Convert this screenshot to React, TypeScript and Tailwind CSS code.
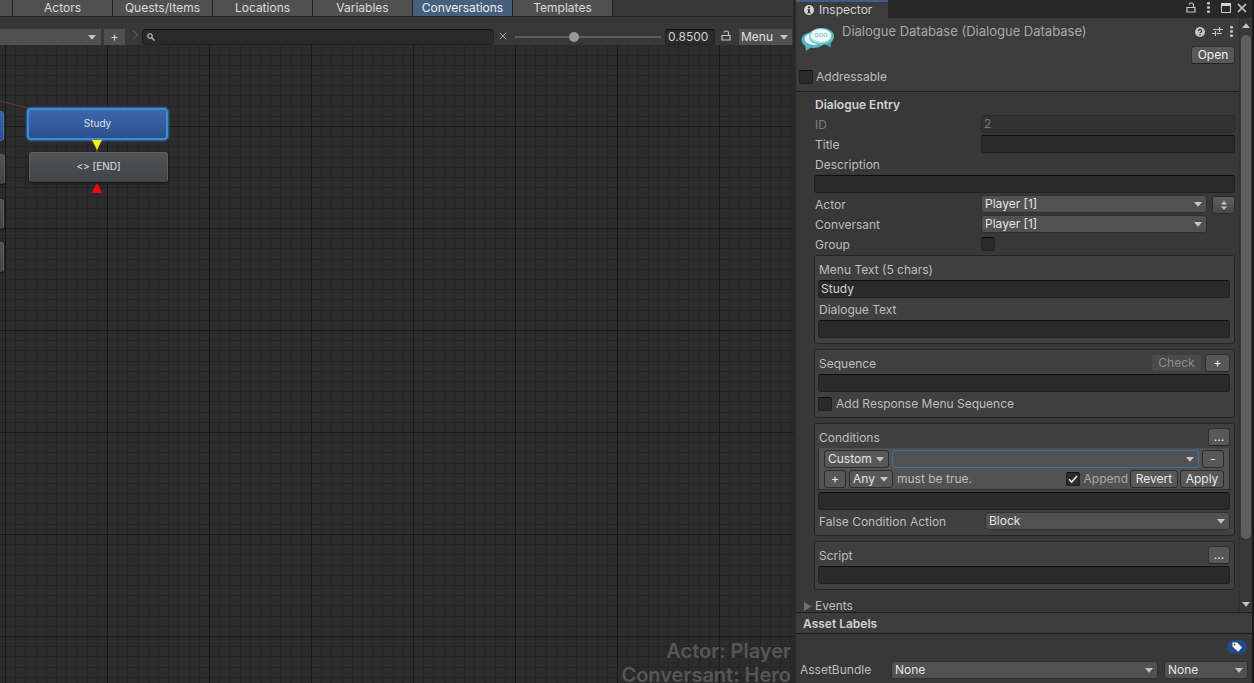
import React, { useId, useState } from 'react';

const tabs = ['Actors', 'Quests/Items', 'Locations', 'Variables', 'Conversations', 'Templates'];

const fieldClass =
  'block h-[18px] w-full min-w-0 rounded-[3px] border border-[#212121] border-t-[#0d0d0d] bg-[#2a2a2a] px-[2px] text-[12px] text-[#d2d2d2] outline-none disabled:border-[#2a2a2a] disabled:bg-[#323232] disabled:text-[#7c7c7c]';
const buttonClass =
  'flex h-[18px] shrink-0 items-center justify-center rounded-[3px] border border-[#303030] border-b-[#242424] bg-[#585858] text-[12px] text-[#eeeeee] disabled:border-[#404040] disabled:bg-[#4a4a4a] disabled:text-[#8c8c8c]';

function Caret({ className = '' }: { className?: string }) {
  return (
    <svg viewBox="0 0 8 5" className={`h-[5px] w-2 ${className}`} fill="#c4c4c4">
      <path d="M0 0h8L4 4.8z" />
    </svg>
  );
}

function LockIcon() {
  return (
    <svg width="10" height="11" viewBox="0 0 10 11" fill="none" stroke="#c4c4c4">
      <path d="M1 5.5h8v4.500H1z" strokeWidth="1.2" />
      <path d="M7.5 5.5V3a2 2 0 0 0-2-2H5a2 2 0 0 0-2 1.6" strokeWidth="1.2" />
    </svg>
  );
}

function KebabIcon() {
  return (
    <svg width="3" height="11" viewBox="0 0 3 11" fill="#c4c4c4">
      <rect width="3" height="2.500" rx=".8" />
      <rect y="4.200" width="3" height="2.500" rx=".8" />
      <rect y="8.400" width="3" height="2.500" rx=".8" />
    </svg>
  );
}

function CloseIcon({ size, color, weight }: { size: number; color: string; weight: number }) {
  return (
    <svg width={size} height={size} viewBox="0 0 10 10" fill="none" stroke={color} strokeWidth={weight}>
      <path d="M1 1l8 8M9 1L1 9" />
    </svg>
  );
}

function DialogueIcon() {
  return (
    <svg width="34" height="26" viewBox="0 0 34 26">
      <path d="M3.500 16l1.500 9 7-5z" fill="#56b0be" />
      <path d="M22 17l7.500 4.500 1-7.500z" fill="#4aa3b3" />
      <ellipse cx="12.500" cy="14" rx="12" ry="8" fill="#58b3c0" />
      <ellipse cx="13" cy="13" rx="9.500" ry="6" fill="#e6f8f7" />
      <ellipse cx="20.500" cy="10.500" rx="12.500" ry="8.500" fill="#62bcc7" />
      <ellipse cx="19.500" cy="10" rx="11" ry="7.500" fill="#a9dde0" />
      <ellipse cx="20" cy="9.500" rx="10" ry="6.200" fill="#f1fbfa" />
      <g fill="none" stroke="#a5d5cf" strokeWidth="1.300">
        <circle cx="15.500" cy="9" r="1.600" />
        <circle cx="20" cy="9" r="1.600" />
        <circle cx="24.500" cy="9" r="1.600" />
      </g>
    </svg>
  );
}

interface DropdownProps {
  label: string;
  options: string[];
  className?: string;
  selectClass?: string;
}

function Dropdown({ label, options, className = '', selectClass = 'border-[#303030] bg-[#515151]' }: DropdownProps) {
  return (
    <div className={`relative ${className}`}>
      <select
        aria-label={label}
        className={`block h-[18px] w-full appearance-none rounded-[3px] border pl-[3px] pr-4 text-[12px] leading-4 text-[#e4e4e4] outline-none ${selectClass}`}
      >
        {options.map((option) => (
          <option key={option}>{option}</option>
        ))}
      </select>
      <Caret className="pointer-events-none absolute right-[5px] top-[7px]" />
    </div>
  );
}

interface CheckboxProps {
  id: string;
  defaultChecked?: boolean;
}

function Checkbox({ id, defaultChecked }: CheckboxProps) {
  return (
    <span className="relative block size-[14px] shrink-0">
      <input
        id={id}
        type="checkbox"
        defaultChecked={defaultChecked}
        className="peer block size-[14px] appearance-none rounded-[2px] border border-[#212121] border-t-[#0d0d0d] bg-[#2a2a2a]"
      />
      <svg
        viewBox="0 0 14 14"
        className="pointer-events-none absolute inset-0 hidden peer-checked:block"
        fill="none"
        stroke="#e8e8e8"
        strokeWidth="1.600"
      >
        <path d="M3 7.200l2.700 2.800L11 4" />
      </svg>
    </span>
  );
}

interface TextRowProps {
  label: string;
  value?: string;
  disabled?: boolean;
}

function InlineField({ label, value = '', disabled }: TextRowProps) {
  const id = useId();
  return (
    <div className="flex h-5 items-start">
      <label htmlFor={id} className={`w-[167px] shrink-0 pl-px leading-5 ${disabled ? 'text-[#7c7c7c]' : ''}`}>
        {label}
      </label>
      <input id={id} type="text" defaultValue={value} disabled={disabled} className={fieldClass} />
    </div>
  );
}

function StackedField({ label, value = '' }: TextRowProps) {
  const id = useId();
  return (
    <div>
      <label htmlFor={id} className="block pl-px leading-5">
        {label}
      </label>
      <div className="h-5">
        <input id={id} type="text" defaultValue={value} className={fieldClass} />
      </div>
    </div>
  );
}

function Group({ children }: { children: React.ReactNode }) {
  return (
    <section className="mt-[5px] rounded-[3px] border border-[#242424] bg-[#404040] pb-[3px] pl-[3px] pr-1 pt-1">
      {children}
    </section>
  );
}

function Toolbar() {
  const [active, setActive] = useState('Conversations');
  return (
    <header className="shrink-0 bg-[#383838]">
      <nav className="flex h-[17px] overflow-hidden border-b border-[#232323]">
        <button aria-label="Database" className="w-[13px] shrink-0 border-r border-[#232323] bg-[#505050]" />
        {tabs.map((tab) => (
          <button
            key={tab}
            onClick={() => setActive(tab)}
            className={`w-[100px] shrink-0 border-r border-[#232323] text-[12px] leading-4 ${
              tab === active ? 'bg-[#46607c] text-[#eeeeee]' : 'bg-[#505050] text-[#dcdcdc]'
            }`}
          >
            {tab}
          </button>
        ))}
      </nav>
      <div className="mt-1 flex h-6 items-end border-t border-[#323232] pr-px">
        <div className="relative w-[101px] shrink-0">
          <select
            aria-label="Conversation"
            className="block h-4 w-full appearance-none bg-[#505050] text-[12px] outline-none"
          />
          <Caret className="pointer-events-none absolute right-[5px] top-[6px]" />
        </div>
        <button className="ml-[3px] flex h-4 w-[21px] shrink-0 items-center justify-center bg-[#505050] text-[12px] text-[#dcdcdc]">
          +
        </button>
        <svg width="7" height="10" viewBox="0 0 7 10" className="mb-[5px] ml-[7px] shrink-0" fill="none" stroke="#6a6a6a">
          <path d="M1 1l4.500 4L1 9" />
        </svg>
        <div className="ml-[3px] flex h-4 flex-1 items-center rounded-[4px] border border-[#222222] border-t-[#0f0f0f] bg-[#2a2a2a] px-1">
          <svg width="8" height="8" viewBox="0 0 8 8" className="shrink-0" fill="none" stroke="#c4c4c4">
            <circle cx="3" cy="3" r="2.200" strokeWidth="1.100" />
            <path d="M4.600 4.600L7.600 7.600" strokeWidth="1.300" />
          </svg>
          <input
            aria-label="Search"
            type="text"
            className="h-3 min-w-0 flex-1 bg-transparent px-1 text-[12px] text-[#d2d2d2] outline-none"
          />
        </div>
        <button aria-label="Clear search" className="mb-[5px] ml-[5px] shrink-0">
          <CloseIcon size={8} color="#a8a8a8" weight={1.2} />
        </button>
        <input
          aria-label="Zoom"
          type="range"
          defaultValue={40}
          className="ml-2 h-4 w-[146px] shrink-0 appearance-none bg-transparent [&::-webkit-slider-runnable-track]:h-[2px] [&::-webkit-slider-runnable-track]:bg-[#5e5e5e] [&::-webkit-slider-thumb]:-mt-1 [&::-webkit-slider-thumb]:size-[10px] [&::-webkit-slider-thumb]:appearance-none [&::-webkit-slider-thumb]:rounded-full [&::-webkit-slider-thumb]:bg-[#999999]"
        />
        <input
          aria-label="Zoom value"
          type="text"
          defaultValue="0.8500"
          className="ml-1 h-4 w-[50px] shrink-0 rounded-[3px] border border-[#222222] border-t-[#0f0f0f] bg-[#2a2a2a] px-[2px] text-[12px] text-[#d2d2d2] outline-none"
        />
        <button aria-label="Lock" className="mb-1 ml-[6px] shrink-0">
          <LockIcon />
        </button>
        <button className="ml-2 flex h-4 w-[53px] shrink-0 items-center justify-between bg-[#505050] pl-[2px] pr-1 text-[12px] text-[#e4e4e4]">
          Menu
          <Caret />
        </button>
      </div>
    </header>
  );
}

const gridSteps = [10, 20, 31, 41, 51, 61, 71, 82, 92];

function Canvas() {
  const greyNode =
    'absolute rounded-[3px] border border-[#5c5e60] border-b-[#3c3e40] bg-linear-to-b from-[#505356] to-[#424547] shadow-[0_1px_3px_#111111]';
  return (
    <main className="relative min-h-0 flex-1 overflow-hidden bg-[#2c2c2c] text-[10px] text-[#e0e0e0]">
      <svg className="absolute inset-0 size-full">
        <defs>
          <pattern id="grid" x="5" y="81" width="102" height="102" patternUnits="userSpaceOnUse">
            {gridSteps.map((n) => (
              <path key={n} d={`M${n}.5 0v102M0 ${n}.5h102`} stroke="#242424" />
            ))}
            <path d="M.5 0v102M0 .5h102" stroke="#191919" />
          </pattern>
        </defs>
        <rect width="100%" height="100%" fill="url(#grid)" />
        <path d="M0 56L32 64" stroke="#70392b" />
      </svg>
      <div className="absolute -left-[136px] top-[66px] h-[30px] w-[140px] rounded-[3px] border border-[#4472b4] bg-linear-to-b from-[#3a66a8] to-[#2c4f8f]" />
      <div className={`${greyNode} -left-[135px] top-[109px] h-[30px] w-[140px]`} />
      <div className={`${greyNode} -left-[136px] top-[154px] h-[30px] w-[140px]`} />
      <div className={`${greyNode} -left-[136px] top-[197px] h-[30px] w-[140px]`} />
      <div className="absolute left-[27px] top-[63px] flex h-8 w-[141px] items-center justify-center rounded-[4px] border-2 border-[#4389cf] bg-linear-to-b from-[#3d68ab] to-[#2b4f90] pb-[2px] shadow-[0_0_2px_1px_#2f6ba8]">
        Study
      </div>
      <div className={`${greyNode} left-[29px] top-[107px] flex h-[30px] w-[139px] items-center justify-center pb-[2px]`}>
        &lt;&gt; [END]
      </div>
      <svg width="12" height="60" viewBox="0 0 12 60" className="absolute left-[91px] top-[92px]">
        <path d="M6 10v5" stroke="#8a7a10" />
        <path d="M1 3h10L6 13z" fill="#f4ee1c" />
        <path d="M.500 56h11L6 46z" fill="#ee0808" />
      </svg>
      <div className="absolute bottom-0 right-[2px] text-right text-[20px] font-semibold text-[#565656]">
        <p className="mb-1 leading-6">Actor: Player</p>
        <p className="leading-4">Conversant: Hero</p>
      </div>
    </main>
  );
}

function InspectorHeader() {
  return (
    <div className="border-b border-[#1c1c1c] bg-[#3c3c3c] pb-[5px] pl-[3px] pr-1 pt-[5px]">
      <div className="flex items-start">
        <div className="ml-[2px] mt-[3px] w-[41px] shrink-0">
          <DialogueIcon />
        </div>
        <h1 className="flex-1 text-[13px] leading-4 text-[#a8a8a8]">Dialogue Database (Dialogue Database)</h1>
        <div className="mt-[3px] flex items-center gap-[7px] pr-[2px]">
          <svg width="10" height="10" viewBox="0 0 10 10">
            <circle cx="5" cy="5" r="5" fill="#c4c4c4" />
            <path
              d="M3.400 4a1.600 1.500 0 1 1 2.400 1.300Q5 5.700 5 6.300M5 7.300v1.200"
              stroke="#383838"
              strokeWidth="1.300"
              fill="none"
            />
          </svg>
          <svg width="11" height="11" viewBox="0 0 11 11" stroke="#c4c4c4" strokeWidth="1.200" fill="none">
            <path d="M1 3.500h6M7.500 1v5M7.500 3.500h3.500M0 7.500h3.500M3.500 5v5M5 7.500h5" />
          </svg>
          <KebabIcon />
        </div>
      </div>
      <div className="-mt-[6px] flex justify-end">
        <button className={`${buttonClass} w-11`}>Open</button>
      </div>
      <div className="mt-1 flex h-[18px] items-center gap-[3px]">
        <Checkbox id="addressable" />
        <label htmlFor="addressable">Addressable</label>
      </div>
    </div>
  );
}

function ConditionsGroup() {
  const helperButton =
    'flex h-[18px] shrink-0 items-center justify-center rounded-[3px] border border-[#2b2b2b] bg-[#585858] text-[12px] text-[#e8e8e8]';
  return (
    <Group>
      <div className="flex h-5 items-start justify-between">
        <label htmlFor="conditions" className="pl-px leading-5">
          Conditions
        </label>
        <button aria-label="Edit conditions" className={`${buttonClass} w-[22px]`}>
          ...
        </button>
      </div>
      <div className="border border-[#2e2e2e] border-t-[#4e4e4e] bg-[#525252] px-[5px]">
        <div className="flex h-5 items-center">
          <Dropdown
            label="Category"
            options={['Custom']}
            className="w-[65px] shrink-0"
            selectClass="border-[#2b2b2b] bg-[#585858]"
          />
          <Dropdown
            label="Condition"
            options={['']}
            className="ml-[3px] flex-1"
            selectClass="border-[#3a72b0] bg-[#515151]"
          />
          <button aria-label="Remove condition" className={`${helperButton} ml-[3px] w-[22px]`}>
            -
          </button>
        </div>
        <div className="flex h-5 items-center">
          <button aria-label="Add condition" className={`${helperButton} w-[22px]`}>
            +
          </button>
          <Dropdown
            label="Match"
            options={['Any']}
            className="ml-[3px] w-11 shrink-0"
            selectClass="border-[#2b2b2b] bg-[#585858]"
          />
          <span className="ml-1 flex-1">must be true.</span>
          <Checkbox id="append" defaultChecked />
          <label htmlFor="append" className="ml-1 text-[#a8a8a8]">
            Append
          </label>
          <button className={`${helperButton} ml-[2px] w-12`}>Revert</button>
          <button className={`${helperButton} ml-[2px] w-11`}>Apply</button>
        </div>
      </div>
      <div className="mt-[2px] h-5">
        <input id="conditions" type="text" className={fieldClass} />
      </div>
      <div className="flex h-5 items-start">
        <span className="w-[167px] shrink-0 pl-px leading-5">False Condition Action</span>
        <Dropdown label="False Condition Action" options={['Block', 'Passthrough']} className="flex-1" />
      </div>
    </Group>
  );
}

function Inspector() {
  return (
    <aside className="flex w-[458px] shrink-0 flex-col border-r-2 border-[#1a1a1a] bg-[#383838] text-[12px] text-[#bebebe]">
      <div className="flex h-[18px] shrink-0 items-center justify-between bg-[#282828] pr-[5px]">
        <div className="flex h-full w-[92px] items-center gap-[5px] border-t-2 border-[#3d5f85] bg-[#3c3c3c] pl-2 text-[#d2d2d2]">
          <svg width="10" height="10" viewBox="0 0 10 10">
            <circle cx="5" cy="5" r="5" fill="#d2d2d2" />
            <path d="M4 1.500h2v1.700H4zM3.500 4.200H6v3h.7v1.100H3.400V7.200H4v-2h-.5z" fill="#333333" />
          </svg>
          Inspector
        </div>
        <div className="flex items-center gap-[6px] pb-[3px]">
          <div className="flex items-center gap-[11px]">
            <button aria-label="Lock inspector">
              <LockIcon />
            </button>
            <button aria-label="Inspector menu">
              <KebabIcon />
            </button>
            <button aria-label="Maximize">
              <svg width="10" height="10" viewBox="0 0 10 10" fill="none" stroke="#d2d2d2">
                <path d="M.500 1.500h9v8h-9z" />
                <path d="M0 1.500h10" strokeWidth="3" />
              </svg>
            </button>
          </div>
          <button aria-label="Close">
            <CloseIcon size={10} color="#d2d2d2" weight={1.5} />
          </button>
        </div>
      </div>

      <div className="flex min-h-0 flex-1">
        <div className="min-w-0 flex-1 overflow-hidden border-r border-[#303030]">
          <InspectorHeader />
          <div className="pl-[18px] pr-1 pt-[3px]">
            <h2 className="pl-px font-semibold leading-5 text-[#d2d2d2]">Dialogue Entry</h2>
            <InlineField label="ID" value="2" disabled />
            <InlineField label="Title" />
            <StackedField label="Description" />
            <div className="flex h-5 items-start">
              <span className="w-[167px] shrink-0 pl-px leading-5">Actor</span>
              <Dropdown label="Actor" options={['Player [1]']} className="flex-1" />
              <button
                aria-label="Swap actor and conversant"
                className="ml-[5px] mt-px flex h-[18px] w-[23px] shrink-0 items-center justify-center rounded-[3px] border border-[#2b2b2b] bg-linear-to-b from-[#606060] to-[#484848]"
              >
                <svg width="6" height="9" viewBox="0 0 6 9" fill="#c4c4c4">
                  <path d="M0 3.500h6L3 0zM0 5.500h6L3 9z" />
                </svg>
              </button>
            </div>
            <div className="flex h-5 items-start pr-7">
              <span className="w-[167px] shrink-0 pl-px leading-5">Conversant</span>
              <Dropdown label="Conversant" options={['Player [1]']} className="flex-1" />
            </div>
            <div className="-mb-[5px] flex h-5 items-start">
              <label htmlFor="group" className="w-[167px] shrink-0 pl-px leading-5">
                Group
              </label>
              <div className="pt-[2px]">
                <Checkbox id="group" />
              </div>
            </div>

            <Group>
              <StackedField label="Menu Text (5 chars)" value="Study" />
              <StackedField label="Dialogue Text" />
            </Group>
            <Group>
              <div className="flex h-5 items-start">
                <label htmlFor="sequence" className="flex-1 pl-px leading-5">
                  Sequence
                </label>
                <button disabled className={`${buttonClass} w-[51px]`}>
                  Check
                </button>
                <button aria-label="Add sequence command" className={`${buttonClass} ml-[3px] w-[25px]`}>
                  +
                </button>
              </div>
              <div className="h-5">
                <input id="sequence" type="text" className={fieldClass} />
              </div>
              <div className="flex h-5 items-center gap-1">
                <Checkbox id="response-menu" />
                <label htmlFor="response-menu">Add Response Menu Sequence</label>
              </div>
            </Group>
            <ConditionsGroup />
            <Group>
              <div className="flex h-5 items-start justify-between">
                <label htmlFor="script" className="pl-px leading-5">
                  Script
                </label>
                <button aria-label="Edit script" className={`${buttonClass} w-[22px]`}>
                  ...
                </button>
              </div>
              <div className="h-5">
                <input id="script" type="text" className={fieldClass} />
              </div>
            </Group>
          </div>
          <button className="mt-2 flex h-4 items-center gap-[3px] pl-2 leading-4">
            <svg width="8" height="9" viewBox="0 0 8 9" fill="#6e6e6e">
              <path d="M0 0v9l7.500-4.500z" />
            </svg>
            Events
          </button>
        </div>
        <div className="flex w-3 shrink-0 flex-col items-center py-[5px]">
          <Caret className="rotate-180" />
          <div className="mt-[7px] h-[504px] w-[10px] shrink rounded-full bg-[#5f5f5f]" />
          <div className="flex-1" />
          <Caret />
        </div>
      </div>

      <footer className="shrink-0 border-t border-[#1c1c1c]">
        <h2 className="h-[21px] border-b border-[#1c1c1c] bg-[#3c3c3c] pl-[7px] pt-px font-semibold leading-5 text-[#d2d2d2]">
          Asset Labels
        </h2>
        <div className="flex justify-end pr-[5px] pt-[6px]">
          <button aria-label="Labels">
            <svg width="20" height="14" viewBox="0 0 20 14" className="block">
              <rect width="20" height="14" rx="7" fill="#234a86" />
              <path d="M5.500 2.500h4.500l5 5-3.800 4.300-5.700-5.300z" fill="#ffffff" />
              <circle cx="7.500" cy="4.600" r="1" fill="#234a86" />
            </svg>
          </button>
        </div>
        <div className="flex items-center gap-[6px] pb-1 pl-1 pr-1 pt-[7px]">
          <span className="w-[85px] shrink-0">AssetBundle</span>
          <Dropdown label="AssetBundle" options={['None']} className="flex-1" />
          <Dropdown label="AssetBundle variant" options={['None']} className="w-[84px] shrink-0" />
        </div>
      </footer>
    </aside>
  );
}

export default function App() {
  return (
    <div className="flex h-screen overflow-hidden bg-[#2a2a2a] font-[Inter,'Liberation_Sans',sans-serif]">
      <div className="mr-[3px] flex min-w-0 flex-1 flex-col">
        <Toolbar />
        <Canvas />
      </div>
      <Inspector />
    </div>
  );
}
